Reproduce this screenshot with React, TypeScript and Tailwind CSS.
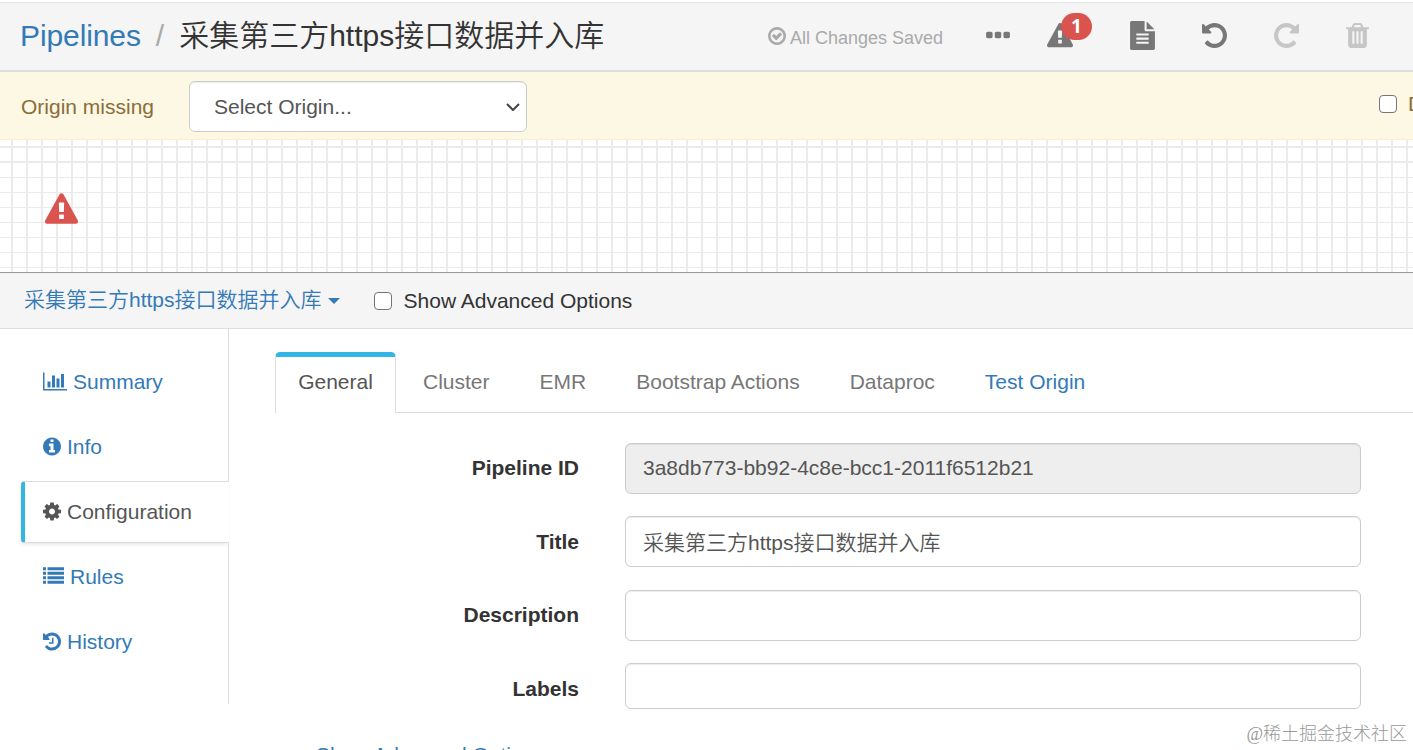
import React from 'react';

const TITLE = '采集第三方https接口数据并入库';

const CIRCLE =
  'm640 416q0 209-103 385.500t-279.500 279.500-385.500 103-385.500-103-279.500-279.500-103-385.500 103-385.500 279.500-279.500 385.500-103 385.500 103 279.500 279.500 103 385.500z';

const UNDO =
  'M1664 896q0 156-61 298t-164 245-245 164-298 61q-172 0-327-72.500t-264-204.500q-7-10-6.500-22.500t8.500-20.500l137-138q10-9 25-9 16 2 23 12 73 95 179 147t225 52q104 0 198.500-40.500t163.500-109.500 109.500-163.500 40.500-198.500-40.500-198.500-109.500-163.500-163.500-109.500-198.500-40.500q-98 0-188 35.500t-160 101.500l137 138q31 30 14 69-17 40-59 40h-448q-26 0-45-19t-19-45v-448q0-42 40-59 39-17 69 14l130 129q107-101 244.500-156.500t284.500-55.500q156 0 298 61t245 164 164 245 61 298z';

const ICONS = {
  check:
    'M1299 813l-422 422q-19 19-45 19t-45-19l-294-294q-19-19-19-45t19-45l102-102q19-19 45-19t45 19l147 147 275-275q19-19 45-19t45 19l102 102q19 19 19 45t-19 45zm141 83q0-148-73-273t-198-198-273-73-273 73-198 198-73 273 73 273 198 198 273 73 273-73 198-198 73-273zm224 0q0 209-103 385.500t-279.500 279.500-385.500 103-385.500-103-279.500-279.500-103-385.500 103-385.500 279.500-279.500 385.500-103 385.500 103 279.500 279.500 103 385.500z',
  ellipsis:
    'M576 736v192q0 40-28 68t-68 28h-192q-40 0-68-28t-28-68v-192q0-40 28-68t68-28h192q40 0 68 28t28 68zm512 0v192q0 40-28 68t-68 28h-192q-40 0-68-28t-28-68v-192q0-40 28-68t68-28h192q40 0 68 28t28 68zm512 0v192q0 40-28 68t-68 28h-192q-40 0-68-28t-28-68v-192q0-40 28-68t68-28h192q40 0 68 28t28 68z',
  warning:
    'M1024 1375v-190q0-14-9.500-23.500t-22.500-9.500h-192q-13 0-22.500 9.500t-9.500 23.500v190q0 14 9.500 23.500t22.500 9.500h192q13 0 22.500-9.500t9.500-23.500zm-2-374l18-459q0-12-10-19-13-11-24-11h-220q-11 0-24 11-10 7-10 21l17 457q0 10 10 16.500t24 6.500h185q14 0 23.500-6.500t10.500-16.500zm-14-934l768 1408q35 63-2 126-17 29-46.500 46t-63.500 17h-1536q-34 0-63.500-17t-46.500-46q-37-63-2-126l768-1408q17-31 47-49t65-18 65 18 47 49z',
  file:
    'M1596 476q14 14 28 36h-472v-472q22 14 36 28zm-476 164h544v1056q0 40-28 68t-68 28h-1344q-40 0-68-28t-28-68v-1600q0-40 28-68t68-28h800v544q0 40 28 68t68 28zm160 736v-64q0-14-9-23t-23-9h-704q-14 0-23 9t-9 23v64q0 14 9 23t23 9h704q14 0 23-9t9-23zm0-256v-64q0-14-9-23t-23-9h-704q-14 0-23 9t-9 23v64q0 14 9 23t23 9h704q14 0 23-9t9-23zm0-256v-64q0-14-9-23t-23-9h-704q-14 0-23 9t-9 23v64q0 14 9 23t23 9h704q14 0 23-9t9-23z',
  undo: UNDO,
  trash:
    'M704 1376v-704q0-14-9-23t-23-9h-64q-14 0-23 9t-9 23v704q0 14 9 23t23 9h64q14 0 23-9t9-23zm256 0v-704q0-14-9-23t-23-9h-64q-14 0-23 9t-9 23v704q0 14 9 23t23 9h64q14 0 23-9t9-23zm256 0v-704q0-14-9-23t-23-9h-64q-14 0-23 9t-9 23v704q0 14 9 23t23 9h64q14 0 23-9t9-23zm-544-992h448l-48-117q-7-9-17-11h-317q-10 2-17 11zm928 32v64q0 14-9 23t-23 9h-96v948q0 83-47 143.500t-113 60.500h-832q-66 0-113-58.500t-47-141.500v-952h-96q-14 0-23-9t-9-23v-64q0-14 9-23t23-9h309l70-167q15-37 54-63t79-26h320q40 0 79 26t54 63l70 167h309q14 0 23 9t9 23z',
  chart:
    'M640 896v512h-256v-512h256zM1024 384v1024h-256v-1024h256zM2048 1536v128h-2048v-1536h128v1408h1920zM1408 640v768h-256v-768h256zM1792 256v1152h-256v-1152h256z',
  info:
    'M1152 1376v-160q0-14-9-23t-23-9h-96v-512q0-14-9-23t-23-9h-320q-14 0-23 9t-9 23v160q0 14 9 23t23 9h96v320h-96q-14 0-23 9t-9 23v160q0 14 9 23t23 9h448q14 0 23-9t9-23zm-128-896v-160q0-14-9-23t-23-9h-192q-14 0-23 9t-9 23v160q0 14 9 23t23 9h192q14 0 23-9t9-23z' +
    CIRCLE,
  cog:
    'M1152 896q0-106-75-181t-181-75-181 75-75 181 75 181 181 75 181-75 75-181zm512-109v222q0 12-8 23t-20 13l-185 28q-19 54-39 91 35 50 107 138 10 12 10 25t-9 23q-27 37-99 108t-94 71q-12 0-26-9l-138-108q-44 23-91 38-16 136-29 186-7 28-36 28h-222q-14 0-24.500-8.500t-11.500-21.500l-28-184q-49-16-90-37l-141 107q-10 9-25 9-14 0-25-11-126-114-165-168-7-10-7-23 0-12 8-23 15-21 51-66.500t54-70.500q-27-50-41-99l-183-27q-13-2-21-12.500t-8-23.500v-222q0-12 8-23t19-13l186-28q14-46 39-92-40-57-107-138-10-12-10-24 0-10 9-23 26-36 98.500-107.500t94.500-71.500q13 0 26 10l138 107q44-23 91-38 16-136 29-186 7-28 36-28h222q14 0 24.500 8.500t11.500 21.500l28 184q49 16 90 37l142-107q9-9 24-9 13 0 25 10 129 119 165 170 7 8 7 22 0 12-8 23-15 21-51 66.500t-54 70.500q26 50 41 98l183 28q13 2 21 12.500t8 23.500z',
  list:
    'M0 192h256v256H0zM384 192h1408v256H384zM0 576h256v256H0zM384 576h1408v256H384zM0 960h256v256H0zM384 960h1408v256H384zM0 1344h256v256H0zM384 1344h1408v256H384z',
  history:
    UNDO +
    'm-640-288v448q0 14-9 23t-23 9h-320q-14 0-23-9t-9-23v-64q0-14 9-23t23-9h224v-352q0-14 9-23t23-9h64q14 0 23 9t9 23z',
};

type IconName = keyof typeof ICONS;

interface IconProps {
  name: IconName;
  viewBox?: string;
  className: string;
}

const Icon: React.FC<IconProps> = ({ name, viewBox = '0 0 1792 1792', className }) => (
  <svg viewBox={viewBox} fill="currentColor" className={`shrink-0 ${className}`}>
    <path d={ICONS[name]} />
  </svg>
);

const NAV: { label: string; icon: IconName; viewBox: string; size: string; row: string }[] = [
  { label: 'Summary', icon: 'chart', viewBox: '0 0 2048 1792', size: 'w-6 h-[21px]', row: 'h-[88px] pt-[17px]' },
  { label: 'Info', icon: 'info', viewBox: '128 0 1536 1792', size: 'w-[18px] h-[21px] mb-px', row: 'h-[65px] pb-[5px]' },
  { label: 'Configuration', icon: 'cog', viewBox: '128 0 1536 1792', size: 'w-[18px] h-[21px] mb-px', row: '' },
  { label: 'Rules', icon: 'list', viewBox: '0 0 1792 1792', size: 'w-[21px] h-[21px] mb-[2px]', row: 'h-[67px]' },
  { label: 'History', icon: 'history', viewBox: '128 0 1536 1792', size: 'w-[18px] h-[21px] mb-px', row: 'h-[64px]' },
];

const TABS = ['Cluster', 'EMR', 'Bootstrap Actions', 'Dataproc', 'Test Origin'];

const FIELDS = [
  {
    label: 'Pipeline ID',
    value: '3a8db773-bb92-4c8e-bcc1-2011f6512b21',
    box: 'h-[51px] pb-[2px] bg-[#eee]',
    row: 'h-[73px]',
    text: 'leading-[49px]',
  },
  { label: 'Title', value: TITLE, box: 'h-[51px] pt-[2px] bg-white', row: 'h-[74px]', text: 'leading-[51px]' },
  { label: 'Description', value: '', box: 'h-[51px] bg-white', row: 'h-[73px]', text: 'leading-[49px]' },
  { label: 'Labels', value: '', box: 'h-[46px] bg-white', row: 'h-[73px]', text: 'leading-[51px]' },
];

const COLUMNS = Array.from({ length: 94 }, (_, i) => 11 + i * 15);
const ROWS = Array.from({ length: 9 }, (_, i) => 7 + i * 15);

const CheckBox = () => (
  <span className="w-[18px] h-[18px] shrink-0 rounded-[4px] border-[1.5px] border-[#767676] bg-white" />
);

const Header = () => (
  <header className="h-[70px] mt-[2px] shrink-0 border-t border-b-2 border-t-[#e5e5e5] border-b-[#ddd] bg-[#f5f5f5] flex items-center">
    <h1 className="w-[748px] pl-5 pb-[1px] flex text-[30px] leading-[42px] text-[#333]">
      <span className="text-[#337ab7] tracking-[-0.1px]">Pipelines</span>
      <span className="ml-[15px] mr-[15px] text-[#aaa]">/</span>
      <span className="font-[350]">{TITLE}</span>
    </h1>
    <div className="flex items-center text-lg text-[#aaa] ml-5 pt-[2px] w-[218px]">
      <Icon name="check" viewBox="128 128 1536 1536" className="w-[18px] h-[18px] mr-1 mb-1" />
      All Changes Saved
    </div>
    <div className="flex items-center pb-[2px] text-[#777]">
      <Icon name="ellipsis" viewBox="192 128 1408 1536" className="w-6 h-[26px]" />
      <span className="relative ml-[37px] w-[26px] h-[26px]">
        <Icon name="warning" className="w-[26px] h-[26px]" />
        <span className="absolute left-[14px] -top-[10px] w-[31px] h-[27px] rounded-full bg-[#d9534f] text-white text-[19px] leading-[27px] font-bold text-center font-['Open_Sans',sans-serif]">
          1
        </span>
      </span>
      <Icon name="file" viewBox="128 0 1536 1792" className="w-[25px] h-[29px] ml-[57px]" />
      <Icon name="undo" viewBox="128 128 1536 1536" className="w-[25px] h-[25px] ml-[47px]" />
      <Icon name="undo" viewBox="128 128 1536 1536" className="w-[25px] h-[25px] ml-[47px] -scale-x-100 text-[#c6c6c6]" />
      <Icon name="trash" viewBox="192 128 1408 1536" className="w-[23px] h-[25px] ml-[47px] text-[#c6c6c6]" />
    </div>
  </header>
);

const OriginBar = () => (
  <div className="h-[68px] shrink-0 bg-[#fcf8e3] border-b border-[#faf0d0] flex items-center text-[#8a6d3b]">
    <span className="w-[189px] pl-[21px] pt-0.5">Origin missing</span>
    <div className="w-[338px] h-[51px] mt-0.5 pl-[24px] pr-1.5 flex items-center justify-between bg-white border border-[#ccc] rounded-md text-[#555] shadow-[inset_0_1px_1px_rgba(0,0,0,0.075)]">
      Select Origin...
      <svg viewBox="0 0 14 8" fill="none" stroke="#444" strokeWidth="2" className="w-[14px] h-2">
        <path d="M1 1l6 6 6-6" />
      </svg>
    </div>
    <div className="w-[34px] ml-auto pb-1 flex items-center overflow-hidden whitespace-nowrap">
      <CheckBox />
      <span className="ml-[11px]">D</span>
    </div>
  </div>
);

const PipelineCanvas = () => (
  <div className="h-[132px] shrink-0 pl-[45px] pt-[53px] relative">
    <svg className="absolute inset-0 w-full h-full" fill="#ebebeb">
      {ROWS.map((y, i) => (
        <rect key={y} x="0" y={i < 2 ? y - 1 : y} width="1413" height={i < 2 ? 2 : 1} />
      ))}
      {COLUMNS.map((x) => (
        <rect key={x} x={x} y="0" width="2" height="132" />
      ))}
    </svg>
    <svg viewBox="0 0 1792 1664" className="relative w-[33px] h-[31px]">
      <path d="M700 450h400v1000h-400z" fill="#fff" />
      <path d={ICONS.warning} fill="#d9534f" />
    </svg>
  </div>
);

const SideNav = () => (
  <nav className="w-[229px] h-[375px] shrink-0 flex flex-col">
    {NAV.map((item) => {
      const active = item.label === 'Configuration';
      if (active) {
        return (
          <div
            key={item.label}
            className="h-[62px] -mt-px ml-[21px] pl-[18px] flex items-center gap-1.5 shrink-0 text-[#555] border-y border-y-[#ddd] border-l-4 border-l-[#33b5e5] rounded-l-[4px] shadow-[-1px_2px_4px_-1px_rgba(0,0,0,0.12)]"
          >
            <Icon name={item.icon} viewBox={item.viewBox} className={item.size} />
            {item.label}
          </div>
        );
      }
      return (
        <div
          key={item.label}
          className={`${item.row} pl-[43px] flex items-center gap-1.5 shrink-0 border-r border-[#ddd] text-[#337ab7]`}
        >
          <Icon name={item.icon} viewBox={item.viewBox} className={item.size} />
          {item.label}
        </div>
      );
    })}
    <div className="flex-1 border-r border-[#ddd]" />
  </nav>
);

const Tabs = () => (
  <div className="flex h-[61px] mt-[23px] ml-[46px]">
    <div className="w-[121px] shrink-0 border-x border-[#ddd] border-t-[5px] border-t-[#33b5e5] rounded-t-[5px] text-center leading-[50px] text-[#555]">
      General
    </div>
    <div className="flex-1 pl-[27px] flex gap-[50px] border-b border-[#ddd] whitespace-nowrap leading-[60px] text-[#777]">
      {TABS.map((tab) => (
        <span key={tab} className={tab === 'Test Origin' ? 'text-[#337ab7]' : ''}>
          {tab}
        </span>
      ))}
    </div>
  </div>
);

const ConfigForm = () => (
  <div className="mt-[30px]">
    {FIELDS.map((field) => (
      <div key={field.label} className={`flex items-start ${field.row}`}>
        <label className={`w-[350px] shrink-0 text-right font-bold text-[#333] ${field.text}`}>{field.label}</label>
        <div
          className={`w-[736px] ml-[46px] px-[17px] flex items-center border border-[#ccc] rounded-md font-[350] text-[#555] shadow-[inset_0_1px_1px_rgba(0,0,0,0.075)] ${field.box}`}
        >
          {field.value}
        </div>
      </div>
    ))}
    <div className="pl-[87px] pt-1 leading-[30px] text-[#337ab7]">Show Advanced Options</div>
  </div>
);

export default function App() {
  return (
    <div className="relative w-[1413px] h-[750px] overflow-hidden flex flex-col bg-white text-[21px] leading-[30px] font-['Liberation_Sans','Noto_Sans_CJK_SC',sans-serif]">
      <Header />
      <OriginBar />
      <PipelineCanvas />
      <div className="h-[57px] shrink-0 border-t border-b border-t-[#999] border-b-[#ddd] bg-[#f5f5f5] flex items-center text-[#333]">
        <span className="pl-6 pb-[2px] font-[350] text-[#337ab7]">{TITLE}</span>
        <span className="ml-[6px] border-x-[6px] border-t-[6px] border-x-transparent border-t-[#337ab7]" />
        <label className="ml-[34px] flex items-center gap-3">
          <CheckBox />
          Show Advanced Options
        </label>
      </div>
      <div className="flex flex-1 min-h-0">
        <SideNav />
        <main className="flex-1 min-w-0">
          <Tabs />
          <ConfigForm />
        </main>
      </div>
      <div className="absolute right-[6px] top-[720px] text-lg leading-7 font-light text-[#999] font-['Liberation_Serif','Noto_Sans_CJK_SC',serif]">
        @稀土掘金技术社区
      </div>
    </div>
  );
}
